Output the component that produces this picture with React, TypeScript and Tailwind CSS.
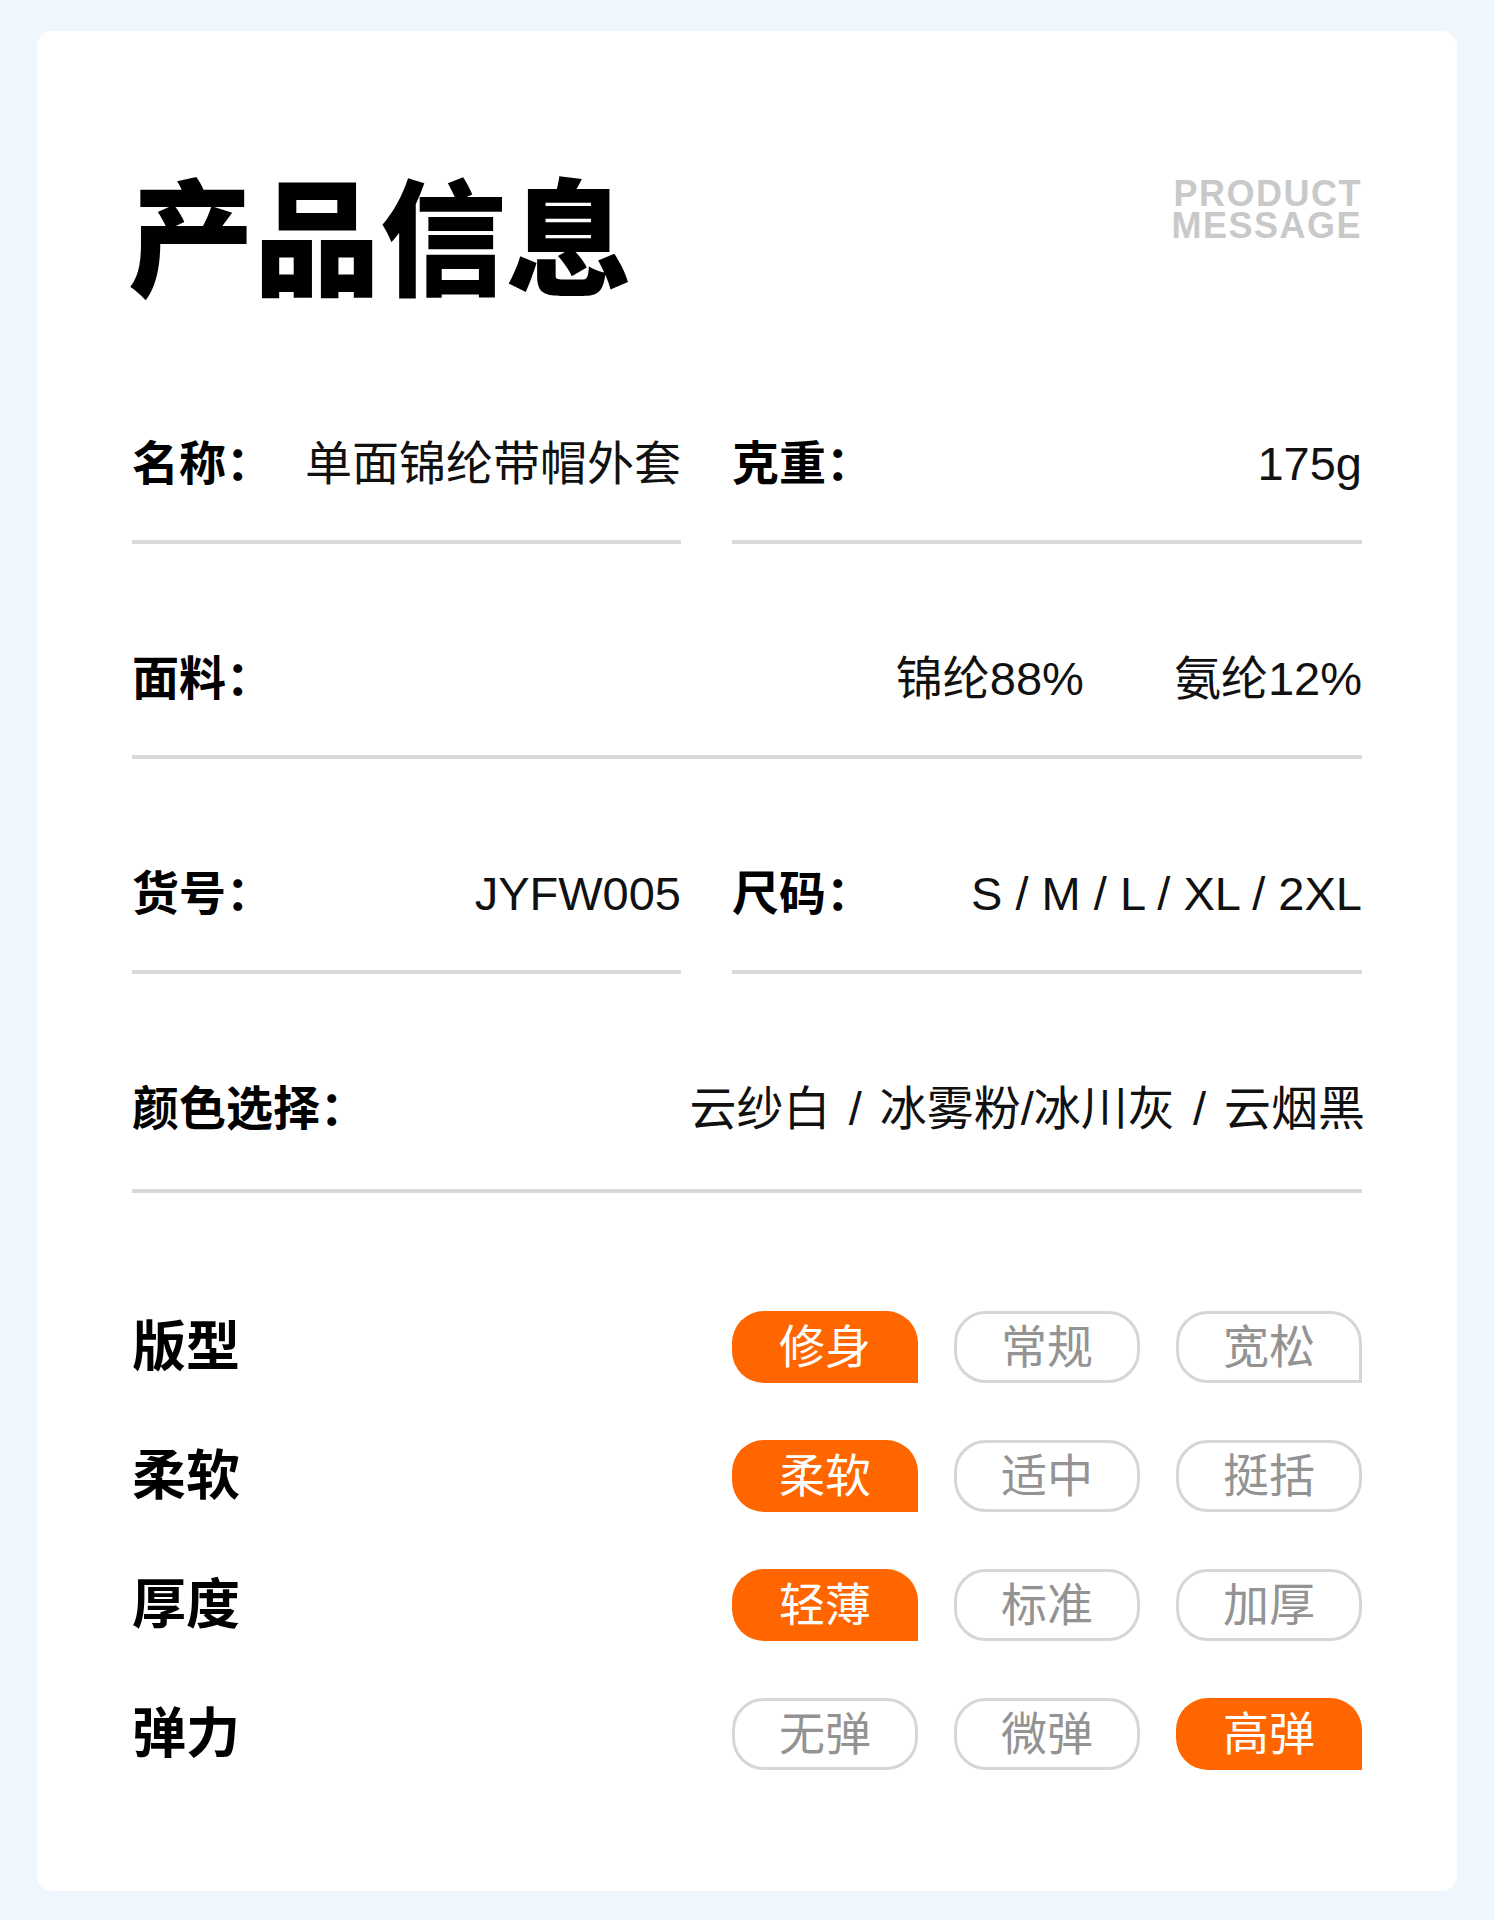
import type { ReactNode } from "react";

type FieldProps = {
  label: string;
  children: ReactNode;
  wide?: boolean;
  extraBottom?: boolean;
};

function Field({ label, children, wide = false, extraBottom = false }: FieldProps) {
  return (
    <div
      className={`flex items-center justify-between border-b-4 border-[#d9d9d9] ${
        extraBottom ? "pb-[50px]" : "pb-[46px]"
      } ${wide ? "col-span-2" : ""}`}
    >
      <span className="font-bold text-black">{label}</span>
      <div className="flex items-center">{children}</div>
    </div>
  );
}

type Option = { text: string; active?: boolean; squareCorner?: boolean };

const ATRIBUTOS: { label: string; options: Option[] }[] = [
  {
    label: "版型",
    options: [
      { text: "修身", active: true },
      { text: "常规" },
      { text: "宽松", squareCorner: true },
    ],
  },
  {
    label: "柔软",
    options: [{ text: "柔软", active: true }, { text: "适中" }, { text: "挺括" }],
  },
  {
    label: "厚度",
    options: [{ text: "轻薄", active: true }, { text: "标准" }, { text: "加厚" }],
  },
  {
    label: "弹力",
    options: [{ text: "无弹" }, { text: "微弹" }, { text: "高弹", active: true }],
  },
];

function Pill({ text, active, squareCorner }: Option) {
  if (active) {
    return (
      <div className="flex h-[72px] w-[186px] items-center justify-center rounded-[32px] rounded-br-none bg-[#ff6600] text-[46px] text-white">
        {text}
      </div>
    );
  }
  return (
    <div
      className={`flex h-[72px] w-[186px] items-center justify-center rounded-[32px] border-[3px] border-[#d6d6d6] text-[46px] text-[#939393] ${
        squareCorner ? "rounded-br-none" : ""
      }`}
    >
      {text}
    </div>
  );
}

export default function App() {
  return (
    <div className="min-h-screen bg-[#f0f6fd] px-[37px] pt-[31px] pb-[30px] font-['Liberation_Sans','Noto_Sans_CJK_SC',sans-serif] text-[#111]">
      <div className="rounded-[15px] bg-white px-[95px] pt-[137px] pb-[121px]">
        <header className="flex items-start justify-between">
          <h1 className="-ml-[4px] font-['Noto_Sans_CJK_SC',sans-serif] text-[126px] leading-none font-black text-black">
            产品信息
          </h1>
          <div className="mt-[10px] text-right text-[36px] font-bold tracking-[1.5px] text-[#c9c9c9]">
            <div className="h-[32px] leading-[32px]">PRODUCT</div>
            <div className="h-[32px] leading-[32px]">MESSAGE</div>
          </div>
        </header>

        <div className="mt-[140px] grid grid-cols-[549px_1fr] gap-x-[51px] gap-y-[105px] text-[47px] leading-[60px]">
          <Field label="名称：">单面锦纶带帽外套</Field>
          <Field label="克重：">175g</Field>

          <Field label="面料：" wide>
            <span>锦纶88%</span>
            <span className="ml-[90px]">氨纶12%</span>
          </Field>

          <Field label="货号：">JYFW005</Field>
          <Field label="尺码：">S / M / L / XL / 2XL</Field>

          <Field label="颜色选择：" wide extraBottom>
            <span className="-mr-[3px] [word-spacing:5px]">
              云纱白 / 冰雾粉/冰川灰 / 云烟黑
            </span>
          </Field>
        </div>

        <div className="mt-[118px] flex flex-col gap-[57px]">
          {ATRIBUTOS.map((attr) => (
            <div key={attr.label} className="flex h-[72px] items-center justify-between">
              <span className="text-[54px] font-bold text-black">{attr.label}</span>
              <div className="flex gap-[36px]">
                {attr.options.map((opt) => (
                  <Pill key={opt.text} {...opt} />
                ))}
              </div>
            </div>
          ))}
        </div>
      </div>
    </div>
  );
}
